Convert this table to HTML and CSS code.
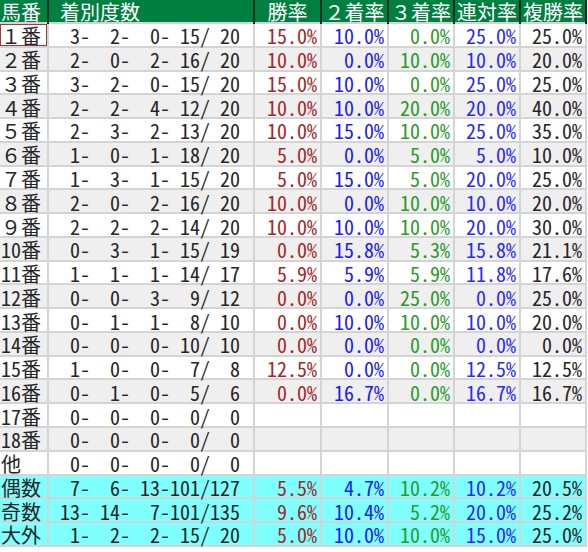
FILE: index.html
```html
<!DOCTYPE html>
<html lang="ja">
<head>
<meta charset="utf-8">
<title>馬番別成績</title>
<link rel="stylesheet" href="styles.css">
</head>
<body>
<table class="grid">
  <colgroup>
    <col class="c-no"><col class="c-rec"><col class="c-p"><col class="c-p"><col class="c-p2"><col class="c-p2"><col class="c-p2">
  </colgroup>
  <thead>
    <tr class="head">
      <th class="h-left">馬番</th><th class="h-left"> 着別度数</th><th>勝率</th><th>２着率</th><th>３着率</th><th>連対率</th><th>複勝率</th>
    </tr>
  </thead>
  <tbody>
    <tr class="odd"><td class="no sel">１番</td><td class="rec">  3-  2-  0- 15/ 20</td><td class="win">15.0%</td><td class="p2">10.0%</td><td class="p3">0.0%</td><td class="ren">25.0%</td><td class="fuku">25.0%</td></tr>
    <tr class="even"><td class="no">２番</td><td class="rec">  2-  0-  2- 16/ 20</td><td class="win">10.0%</td><td class="p2">0.0%</td><td class="p3">10.0%</td><td class="ren">10.0%</td><td class="fuku">20.0%</td></tr>
    <tr class="odd"><td class="no">３番</td><td class="rec">  3-  2-  0- 15/ 20</td><td class="win">15.0%</td><td class="p2">10.0%</td><td class="p3">0.0%</td><td class="ren">25.0%</td><td class="fuku">25.0%</td></tr>
    <tr class="even"><td class="no">４番</td><td class="rec">  2-  2-  4- 12/ 20</td><td class="win">10.0%</td><td class="p2">10.0%</td><td class="p3">20.0%</td><td class="ren">20.0%</td><td class="fuku">40.0%</td></tr>
    <tr class="odd"><td class="no">５番</td><td class="rec">  2-  3-  2- 13/ 20</td><td class="win">10.0%</td><td class="p2">15.0%</td><td class="p3">10.0%</td><td class="ren">25.0%</td><td class="fuku">35.0%</td></tr>
    <tr class="even"><td class="no">６番</td><td class="rec">  1-  0-  1- 18/ 20</td><td class="win">5.0%</td><td class="p2">0.0%</td><td class="p3">5.0%</td><td class="ren">5.0%</td><td class="fuku">10.0%</td></tr>
    <tr class="odd"><td class="no">７番</td><td class="rec">  1-  3-  1- 15/ 20</td><td class="win">5.0%</td><td class="p2">15.0%</td><td class="p3">5.0%</td><td class="ren">20.0%</td><td class="fuku">25.0%</td></tr>
    <tr class="even"><td class="no">８番</td><td class="rec">  2-  0-  2- 16/ 20</td><td class="win">10.0%</td><td class="p2">0.0%</td><td class="p3">10.0%</td><td class="ren">10.0%</td><td class="fuku">20.0%</td></tr>
    <tr class="odd"><td class="no">９番</td><td class="rec">  2-  2-  2- 14/ 20</td><td class="win">10.0%</td><td class="p2">10.0%</td><td class="p3">10.0%</td><td class="ren">20.0%</td><td class="fuku">30.0%</td></tr>
    <tr class="even"><td class="no">10番</td><td class="rec">  0-  3-  1- 15/ 19</td><td class="win">0.0%</td><td class="p2">15.8%</td><td class="p3">5.3%</td><td class="ren">15.8%</td><td class="fuku">21.1%</td></tr>
    <tr class="odd"><td class="no">11番</td><td class="rec">  1-  1-  1- 14/ 17</td><td class="win">5.9%</td><td class="p2">5.9%</td><td class="p3">5.9%</td><td class="ren">11.8%</td><td class="fuku">17.6%</td></tr>
    <tr class="even"><td class="no">12番</td><td class="rec">  0-  0-  3-  9/ 12</td><td class="win">0.0%</td><td class="p2">0.0%</td><td class="p3">25.0%</td><td class="ren">0.0%</td><td class="fuku">25.0%</td></tr>
    <tr class="odd"><td class="no">13番</td><td class="rec">  0-  1-  1-  8/ 10</td><td class="win">0.0%</td><td class="p2">10.0%</td><td class="p3">10.0%</td><td class="ren">10.0%</td><td class="fuku">20.0%</td></tr>
    <tr class="even"><td class="no">14番</td><td class="rec">  0-  0-  0- 10/ 10</td><td class="win">0.0%</td><td class="p2">0.0%</td><td class="p3">0.0%</td><td class="ren">0.0%</td><td class="fuku">0.0%</td></tr>
    <tr class="odd"><td class="no">15番</td><td class="rec">  1-  0-  0-  7/  8</td><td class="win">12.5%</td><td class="p2">0.0%</td><td class="p3">0.0%</td><td class="ren">12.5%</td><td class="fuku">12.5%</td></tr>
    <tr class="even"><td class="no">16番</td><td class="rec">  0-  1-  0-  5/  6</td><td class="win">0.0%</td><td class="p2">16.7%</td><td class="p3">0.0%</td><td class="ren">16.7%</td><td class="fuku">16.7%</td></tr>
    <tr class="odd"><td class="no">17番</td><td class="rec">  0-  0-  0-  0/  0</td><td></td><td></td><td></td><td></td><td></td></tr>
    <tr class="even"><td class="no">18番</td><td class="rec">  0-  0-  0-  0/  0</td><td></td><td></td><td></td><td></td><td></td></tr>
    <tr class="odd"><td class="no">他</td><td class="rec">  0-  0-  0-  0/  0</td><td></td><td></td><td></td><td></td><td></td></tr>
    <tr class="sum"><td class="no">偶数</td><td class="rec">  7-  6- 13-101/127</td><td class="win">5.5%</td><td class="p2">4.7%</td><td class="p3">10.2%</td><td class="ren">10.2%</td><td class="fuku">20.5%</td></tr>
    <tr class="sum"><td class="no">奇数</td><td class="rec"> 13- 14-  7-101/135</td><td class="win">9.6%</td><td class="p2">10.4%</td><td class="p3">5.2%</td><td class="ren">20.0%</td><td class="fuku">25.2%</td></tr>
    <tr class="sum"><td class="no">大外</td><td class="rec">  1-  2-  2- 15/ 20</td><td class="win">5.0%</td><td class="p2">10.0%</td><td class="p3">10.0%</td><td class="ren">15.0%</td><td class="fuku">25.0%</td></tr>
  </tbody>
</table>
</body>
</html>
```

FILE: styles.css
```css
html, body {
  margin: 0;
  padding: 0;
  background: #ffffff;
}

.grid {
  border-collapse: collapse;
  table-layout: fixed;
  width: 586px;
  font-family: "Noto Sans Mono CJK JP", "Noto Sans CJK JP", monospace;
  font-size: 20px;
  line-height: 18px;
  color: #262626;
}

.c-no { width: 48px; }
.c-rec { width: 206px; }
.c-p { width: 67px; }
.c-p2 { width: 66px; }

.head { height: 23px; }
.grid tbody tr { height: 23.77px; }

.head th {
  height: 0;
  background: #008040;
  color: #ffffff;
  font-weight: normal;
  text-align: center;
  padding: 2px 0 0 0;
  border: 2px solid #1c2e1c;
  border-top: 0;
  border-bottom: 1px solid #1c2e1c;
  white-space: pre;
  vertical-align: middle;
}
.head th:first-child { border-left: 0; }
.head .h-left { text-align: left; padding-left: 1px; }

td {
  height: 0;
  padding: 3px 3px 0 3px;
  border: 2px solid #d4d4d4;
  text-align: right;
  white-space: pre;
  vertical-align: middle;
}
td:first-child { border-left: 0; }

.odd td { background: #ffffff; }
.even td { background: #efefef; }
.sum td { background: #80ffff; }

td.no { text-align: left; padding-left: 1px; padding-right: 0; }
td.rec { text-align: left; padding-left: 1px; }

td.sel { box-shadow: inset 0 0 0 1px #a03a3a; }

.win { color: #a32828; }
.p2 { color: #1a1aff; }
.p3 { color: #2a9a2a; }
.ren { color: #2a2aff; }
.fuku { color: #262626; }
```
